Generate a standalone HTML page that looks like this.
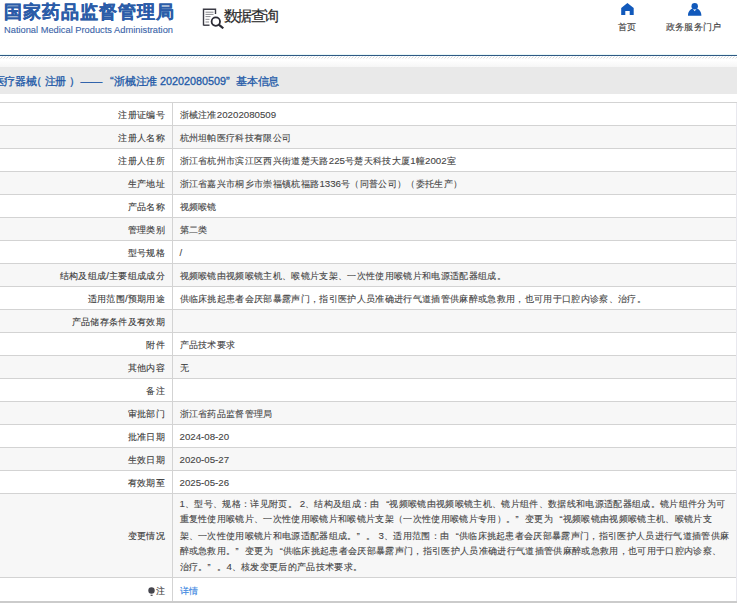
<!DOCTYPE html>
<html><head><meta charset="utf-8">
<style>
*{margin:0;padding:0;box-sizing:border-box}
html,body{width:737px;height:609px;overflow:hidden;background:#fff;font-family:"Liberation Sans",sans-serif;color:#333}
.abs{position:absolute;white-space:nowrap}
#t1{left:3.6px;top:0.3px;font-size:18px;letter-spacing:1.0px;font-weight:bold;color:#2b5ca8;line-height:24px;-webkit-text-stroke:0.3px #2b5ca8}
#t2{left:4px;top:23px;font-size:9.3px;letter-spacing:0px;color:#3a64a8;line-height:14px;-webkit-text-stroke:0.1px #3a64a8}
#qicon{left:202px;top:8px;width:24px;height:21px}
#qtxt{left:224px;top:5px;font-size:15px;letter-spacing:-1.6px;color:#2a2a2a;line-height:22px;-webkit-text-stroke:0.2px #2a2a2a}
#home{left:621px;top:3px}
#hometxt{left:618px;top:20.8px;font-size:9px;letter-spacing:0.2px;color:#444;line-height:13px;-webkit-text-stroke:0.15px #444}
#user{left:688px;top:2px}
#usertxt{left:666px;top:20.8px;font-size:9px;letter-spacing:0.2px;color:#444;line-height:13px;-webkit-text-stroke:0.15px #444}
#bline{left:0;top:55px;width:737px;height:1px;background:#2f5a85}
#cyan{left:0;top:54px;width:737px;height:1px;background:#eaf8f8}
#hatch{left:0;top:56px;width:737px;height:3px}
#fade{left:0;top:60px;width:737px;height:7px;background:linear-gradient(#fff,#f6f6f6)}
#bar{left:0;top:67px;width:737px;height:27px;background:#e9e9e9}
.bt{top:74px;font-size:11px;letter-spacing:-0.2px;color:#2259a8;line-height:15px;-webkit-text-stroke:0.3px #2259a8}
.bt .n{font-size:10.8px;letter-spacing:0}
table{position:absolute;left:-1px;top:102px;width:738px;border-collapse:collapse;table-layout:fixed}
td{border:1px solid #d3d3d3;height:23px;font-size:9px;letter-spacing:0.33px;line-height:13px;white-space:nowrap;overflow:hidden;padding:2px 0 0 0;-webkit-text-stroke:0.1px currentColor}
td .n{font-size:9.7px;letter-spacing:0}
td.l{width:173px;text-align:right;padding-right:7px;color:#383838}
td.v{padding-left:6.5px;color:#444}
tr:nth-child(even) td{background:#f7f7f7}
#rline{left:736px;top:103px;width:1px;height:498px;background:#e8e8ee}
.chg td{height:84px}
.chg td.v{line-height:15.3px;padding-top:2px;padding-bottom:2px}
td a{color:#2f80e0;text-decoration:none}
.bulb{vertical-align:-3.2px;margin-right:1px}
#bottom{left:0;top:601px;width:737px;height:2px;background:#cbcbcb}
tr.last td{height:24px;padding-top:3px}
.qo,.qc{display:inline-block;width:9.6px;letter-spacing:0}
.qo{text-align:right}
.qc{text-align:left}

</style></head><body>
<div class="abs" id="t1">国家药品监督管理局</div>
<div class="abs" id="t2">National Medical Products Administration</div>
<svg class="abs" id="qicon" viewBox="0 0 24 21" width="24" height="21">
  <path d="M1.5 17.5V1.2H13.5V6" fill="none" stroke="#3a3a44" stroke-width="1.4"/>
  <path d="M1.5 17.2H7.5" fill="none" stroke="#3a3a44" stroke-width="1.4"/>
  <path d="M3.5 4.2H11.5M3.5 6.4H11.5M3.5 8.6H8.5M3.5 11.3H7.5M3.5 14H7" stroke="#8a8a90" stroke-width="1"/>
  <circle cx="13.8" cy="13.6" r="4.2" fill="none" stroke="#2a2a34" stroke-width="1.8"/>
  <path d="M16.8 16.6L21.3 20.3" stroke="#2a2a34" stroke-width="2.2"/>
</svg>
<div class="abs" id="qtxt">数据查询</div>
<svg class="abs" id="home" width="13" height="12" viewBox="0 0 13 12">
  <path d="M6.4 0L12.7 5V12H8.7V8H4.3V12H0.2V5Z" fill="#1159bb"/>
</svg>
<div class="abs" id="hometxt">首页</div>
<svg class="abs" id="user" width="14" height="14" viewBox="0 0 14 14">
  <circle cx="6.7" cy="4.3" r="3.2" fill="#1159bb"/>
  <path d="M0 13.7C0 9.5 2.5 7.2 4.6 6.6L6.7 9.2L8.8 6.6C11 7.2 13.4 9.5 13.4 13.7Z" fill="#1159bb"/>
</svg>
<div class="abs" id="usertxt">政务服务门户</div>
<div class="abs" id="cyan"></div>
<div class="abs" id="bline"></div>
<svg class="abs" id="hatch" width="737" height="3"><defs><pattern id="hp" width="3" height="3" patternUnits="userSpaceOnUse"><rect x="2" y="0" width="1" height="1" fill="#e6e6e6"/><rect x="1" y="1" width="1" height="1" fill="#d6d6d6"/><rect x="0" y="2" width="1" height="1" fill="#ececec"/></pattern></defs><rect width="737" height="3" fill="url(#hp)"/></svg>
<div class="abs" id="fade"></div>
<div class="abs" id="bar"></div>
<div class="abs bt" style="left:-6.5px">医疗器械</div>
<div class="abs bt" style="left:31.2px">（</div>
<div class="abs bt" style="left:44.5px">注册</div>
<div class="abs bt" style="left:69px">）</div>
<div class="abs bt" style="left:80.5px">——</div>
<div class="abs bt" id="q1" style="left:110px">“</div>
<div class="abs bt" id="zh" style="left:114px">浙械注准</div>
<div class="abs bt" id="dg" style="left:160px"><span class="n">20202080509</span></div>
<div class="abs bt" id="q2" style="left:226px">”</div>
<div class="abs bt" style="left:236px">基本信息</div>

<table>
<tr><td class="l">注册证编号</td><td class="v">浙械注准<span class="n">20202080509</span></td></tr>
<tr><td class="l">注册人名称</td><td class="v">杭州坦帕医疗科技有限公司</td></tr>
<tr><td class="l">注册人住所</td><td class="v">浙江省杭州市滨江区西兴街道楚天路<span class="n">225</span>号楚天科技大厦<span class="n">1</span>幢<span class="n">2002</span>室</td></tr>
<tr><td class="l">生产地址</td><td class="v">浙江省嘉兴市桐乡市崇福镇杭福路<span class="n">1336</span>号（同普公司）（委托生产）</td></tr>
<tr><td class="l">产品名称</td><td class="v">视频喉镜</td></tr>
<tr><td class="l">管理类别</td><td class="v">第二类</td></tr>
<tr><td class="l">型号规格</td><td class="v"><span class="n">/</span></td></tr>
<tr><td class="l">结构及组成<span class="n">/</span>主要组成成分</td><td class="v">视频喉镜由视频喉镜主机、喉镜片支架、一次性使用喉镜片和电源适配器组成。</td></tr>
<tr><td class="l">适用范围<span class="n">/</span>预期用途</td><td class="v">供临床挑起患者会厌部暴露声门，指引医护人员准确进行气道插管供麻醉或急救用，也可用于口腔内诊察、治疗。</td></tr>
<tr><td class="l">产品储存条件及有效期</td><td class="v"></td></tr>
<tr><td class="l">附件</td><td class="v">产品技术要求</td></tr>
<tr><td class="l">其他内容</td><td class="v">无</td></tr>
<tr><td class="l">备注</td><td class="v"></td></tr>
<tr><td class="l">审批部门</td><td class="v">浙江省药品监督管理局</td></tr>
<tr><td class="l">批准日期</td><td class="v"><span class="n">2024-08-20</span></td></tr>
<tr><td class="l">生效日期</td><td class="v"><span class="n">2020-05-27</span></td></tr>
<tr><td class="l">有效期至</td><td class="v"><span class="n">2025-05-26</span></td></tr>
<tr class="chg"><td class="l">变更情况</td><td class="v"><span class="n">1</span>、型号、规格：详见附页。 <span class="n">2</span>、结构及组成：由<span class="qo">“</span>视频喉镜由视频喉镜主机、镜片组件、数据线和电源适配器组成。镜片组件分为可<br>重复性使用喉镜片、一次性使用喉镜片和喉镜片支架（一次性使用喉镜片专用）。<span class="qc">”</span>变更为<span class="qo">“</span>视频喉镜由视频喉镜主机、喉镜片支<br>架、一次性使用喉镜片和电源适配器组成。<span class="qc">”</span>。 <span class="n">3</span>、适用范围：由<span class="qo">“</span>供临床挑起患者会厌部暴露声门，指引医护人员进行气道插管供麻<br>醉或急救用。<span class="qc">”</span>变更为<span class="qo">“</span>供临床挑起患者会厌部暴露声门，指引医护人员准确进行气道插管供麻醉或急救用，也可用于口腔内诊察、<br>治疗。<span class="qc">”</span>。<span class="n">4</span>、核发变更后的产品技术要求。</td></tr>
<tr class="last"><td class="l"><svg class="bulb" width="7" height="10" viewBox="0 0 7 10"><circle cx="3.5" cy="3.5" r="3.2" fill="#46464e"/><rect x="2.6" y="7.7" width="2" height="1.2" fill="#46464e"/></svg>注</td><td class="v"><a>详情</a></td></tr>
</table>
<div class="abs" id="rline"></div>
<div class="abs" id="bottom"></div>
</body></html>
